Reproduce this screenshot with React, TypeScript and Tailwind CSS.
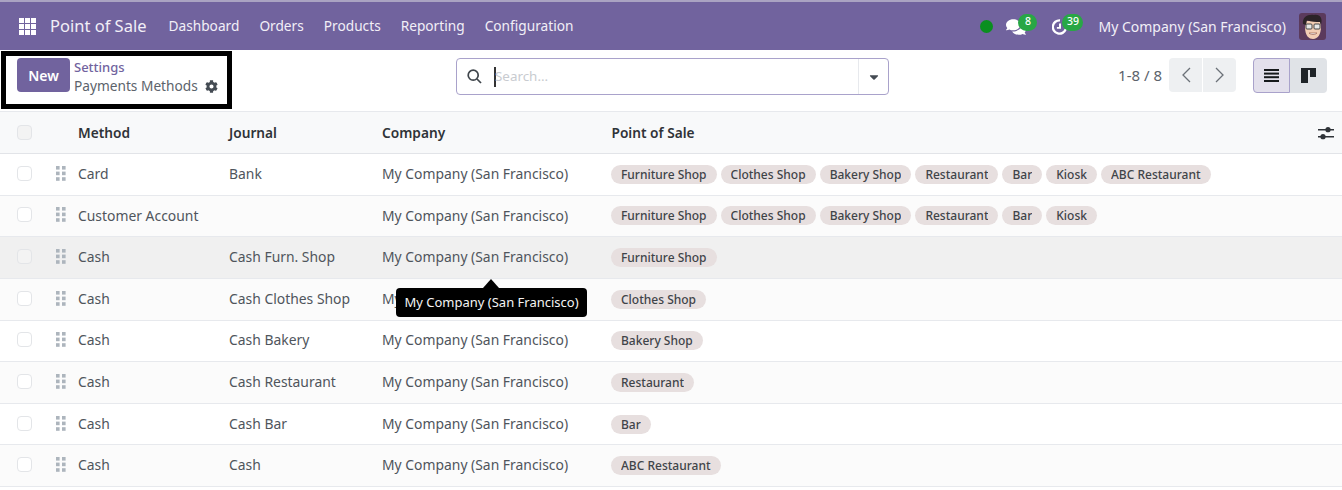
import React from "react";
import { FaCog, FaComments, FaCaretDown } from "react-icons/fa";

const font = { fontFamily: '"Noto Sans", "Open Sans", sans-serif' };

const rows: { method: string; journal: string; tags: string[]; bg: string }[] = [
  { method: "Card", journal: "Bank", tags: ["Furniture Shop", "Clothes Shop", "Bakery Shop", "Restaurant", "Bar", "Kiosk", "ABC Restaurant"], bg: "bg-white" },
  { method: "Customer Account", journal: "", tags: ["Furniture Shop", "Clothes Shop", "Bakery Shop", "Restaurant", "Bar", "Kiosk"], bg: "bg-[#fbfbfb]" },
  { method: "Cash", journal: "Cash Furn. Shop", tags: ["Furniture Shop"], bg: "bg-[#f0f0f0]" },
  { method: "Cash", journal: "Cash Clothes Shop", tags: ["Clothes Shop"], bg: "bg-[#fbfbfb]" },
  { method: "Cash", journal: "Cash Bakery", tags: ["Bakery Shop"], bg: "bg-white" },
  { method: "Cash", journal: "Cash Restaurant", tags: ["Restaurant"], bg: "bg-[#fbfbfb]" },
  { method: "Cash", journal: "Cash Bar", tags: ["Bar"], bg: "bg-white" },
  { method: "Cash", journal: "Cash", tags: ["ABC Restaurant"], bg: "bg-[#fbfbfb]" },
];

function Checkbox({ dim }: { dim?: boolean }) {
  return <div className={`w-[15px] h-[15px] rounded-[4px] border border-[#e3e5e8] ${dim ? "bg-[#f3f3f3]" : "bg-white"}`} />;
}

function Grip() {
  return (
    <svg className="block" width="10" height="15" viewBox="0 0 10 15" fill="#adb5bd">
      <rect x="0" y="0" width="3.6" height="3.6" />
      <rect x="6" y="0" width="3.6" height="3.6" />
      <rect x="0" y="5.6" width="3.6" height="3.6" />
      <rect x="6" y="5.6" width="3.6" height="3.6" />
      <rect x="0" y="11.2" width="3.6" height="3.6" />
      <rect x="6" y="11.2" width="3.6" height="3.6" />
    </svg>
  );
}

function Avatar() {
  return (
    <svg className="block" width="27" height="27" viewBox="0 0 27 27">
      <rect width="27" height="27" rx="3" fill="#5b3a5c" />
      <path d="M6 14 C6 23 10 26 14 26 C19 26 22 21 22 14 L21 8 L7 8 Z" fill="#f3cdb4" />
      <path d="M4 11 C3 4 9 1 15 2 C21 1 24 5 22 12 L21 9 C17 9 12 9 8 7 L7 12 Z" fill="#2b2327" />
      <rect x="7" y="11" width="6" height="5" rx="1" fill="#e8e8e8" stroke="#444" strokeWidth="1" />
      <rect x="15" y="11" width="6" height="5" rx="1" fill="#e8e8e8" stroke="#444" strokeWidth="1" />
      <path d="M10 20 C12 22 16 22 18 20 Z" fill="#fff" stroke="#8a4a3a" strokeWidth="0.6" />
    </svg>
  );
}

export default function App() {
  return (
    <div className="relative w-[1342px] h-[490px] overflow-hidden bg-white text-[13.9px] text-[#4f555c]" style={font}>
      {/* Nav */}
      <div className="h-[50px] bg-[#71639e] flex items-center text-[#f2eff7] border-t-2 border-[#aaa3c2]">
        <svg className="ml-[19px]" width="17" height="17" viewBox="0 0 17 17" fill="#fff">
          {[0, 6, 12].flatMap((y) => [0, 6, 12].map((x) => <rect key={`${x}-${y}`} x={x} y={y} width="5" height="5" />))}
        </svg>
        <span className="ml-[14px] text-[16.5px]">Point of Sale</span>
        <div className="ml-[22px] flex gap-[20px] text-[13.7px]">
          <span>Dashboard</span>
          <span>Orders</span>
          <span>Products</span>
          <span>Reporting</span>
          <span>Configuration</span>
        </div>
        <div className="ml-auto flex items-center">
          <div className="w-[13px] h-[13px] rounded-full bg-[#0a8f1f]" />
          <div className="relative ml-[13px] w-[20px] h-[16px] mt-[1px]">
            <FaComments size={20} className="block text-white mt-[-2px]" />
            <span className="absolute left-[12px] top-[-5px] h-[17px] w-[19px] rounded-full bg-[#28a745] text-white text-[10.5px] font-medium flex items-center justify-center">8</span>
          </div>
          <div className="relative ml-[26px] w-[16px] h-[16px] mt-[1px]">
            <svg className="block" width="16" height="16" viewBox="0 0 18 18" fill="none" stroke="#fff" strokeWidth="2.6">
              <path d="M15.5 11.5 A7.5 7.5 0 1 1 9 1.5" />
              <path d="M9 5 V10 H5.5" strokeWidth="2.2" />
            </svg>
            <span className="absolute left-[10px] top-[-5px] h-[17px] w-[21px] rounded-full bg-[#28a745] text-white text-[10.5px] font-medium flex items-center justify-center">39</span>
          </div>
          <span className="ml-[30px] text-[14px]">My Company (San Francisco)</span>
          <div className="ml-[13px] mr-[16px]"><Avatar /></div>
        </div>
      </div>

      {/* Control panel */}
      <div className="h-[62px] flex items-start border-b border-[#e7e9ed]">
        <div className="ml-[1px] mt-px w-[231px] h-[58px] border-[5px] border-black flex items-start pl-[11px] pt-[2px] shrink-0">
          <button className="w-[53px] h-[34px] rounded-[4px] bg-[#71639e] text-white text-[14px] font-semibold flex items-center justify-center">New</button>
          <div className="ml-[4px] flex flex-col text-[13.7px] leading-[18px]">
            <span className="text-[#71639e] text-[13px] font-medium">Settings</span>
            <span className="flex items-center text-[#5c636b] mt-[1px]">Payments Methods<FaCog size={13} className="ml-[7px] text-[#444b53]" /></span>
          </div>
        </div>
        <div className="ml-[224px] mt-[8px] w-[433px] h-[37px] rounded-[4px] border border-[#a9a2cb] flex items-center">
          <svg className="ml-[10px]" width="15" height="15" viewBox="0 0 15 15" fill="none" stroke="#3f454b" strokeWidth="1.7">
            <circle cx="6.2" cy="6.2" r="5" /><path d="M10 10 L14 14" />
          </svg>
          <div className="ml-[12px] w-[2px] h-[20px] bg-[#333]" />
          <span className="text-[#c8cbd0] text-[13.4px] ml-[-1px]">Search...</span>
          <div className="ml-auto w-[30px] h-full border-l border-[#e7e9ed] flex items-center justify-center">
            <FaCaretDown size={14} className="text-[#444b53]" />
          </div>
        </div>
        <div className="ml-auto mt-[8px] flex items-center h-[34px] mr-[15px]">
          <span className="text-[15px] text-[#5c636b]">1-8 / 8</span>
          <div className="ml-[7px] flex gap-px">
            <div className="w-[33px] h-[34px] rounded-l-[4px] bg-[#eef0f2] flex items-center justify-center">
              <svg width="10" height="16" viewBox="0 0 10 16" fill="none" stroke="#6b7178" strokeWidth="1.3"><path d="M9 1 L2 8 L9 15" /></svg>
            </div>
            <div className="w-[33px] h-[34px] rounded-r-[4px] bg-[#eef0f2] flex items-center justify-center">
              <svg width="10" height="16" viewBox="0 0 10 16" fill="none" stroke="#6b7178" strokeWidth="1.3"><path d="M1 1 L8 8 L1 15" /></svg>
            </div>
          </div>
          <div className="ml-[17px] flex">
            <div className="w-[37px] h-[35px] rounded-l-[4px] bg-[#e3e0ec] border border-[#a9a2cb] flex items-center justify-center">
              <svg width="15" height="13" viewBox="0 0 15 13" fill="#16191c">
                <rect y="0" width="15" height="2" /><rect y="3.6" width="15" height="2" /><rect y="7.2" width="15" height="2" /><rect y="11" width="15" height="2" />
              </svg>
            </div>
            <div className="w-[37px] h-[35px] rounded-r-[4px] bg-[#e0e3e7] flex items-center justify-center">
              <svg width="15" height="15" viewBox="0 0 15 15" fill="#1f2428">
                <rect x="0" y="0" width="15" height="2" /><rect x="0" y="0" width="7" height="15" /><rect x="9" y="0" width="6" height="9" />
              </svg>
            </div>
          </div>
        </div>
      </div>

      {/* Table header */}
      <div className="h-[42px] bg-[#f8f9fa] border-b border-[#e2e4e8] flex items-center font-semibold text-[#2f3338] text-[13.7px]">
        <div className="w-[78px] pl-[17px]"><Checkbox dim /></div>
        <div className="w-[151px] pt-[2px]">Method</div>
        <div className="w-[153px] pt-[2px]">Journal</div>
        <div className="w-[229.5px] pt-[2px]">Company</div>
        <div className="flex-1 pt-[2px]">Point of Sale</div>
        <svg className="mr-[8px]" width="16" height="14" viewBox="0 0 16 14" fill="#2f3338">
          <rect y="3" width="16" height="1.5" /><circle cx="10" cy="3.7" r="2.6" />
          <rect y="10" width="16" height="1.5" /><circle cx="5" cy="10.7" r="2.6" />
        </svg>
      </div>

      {/* Rows */}
      {rows.map((r, i) => (
        <div key={i} className={`h-[41.65px] ${r.bg} border-b border-[#e7e9ed] flex items-center`}>
          <div className="w-[56px] pl-[17px] shrink-0 mt-[-2px]"><Checkbox dim={i === 2} /></div>
          <div className="w-[22px] shrink-0 mt-[-2px]"><Grip /></div>
          <div className="w-[151px] shrink-0">{r.method}</div>
          <div className="w-[153px] shrink-0">{r.journal}</div>
          <div className="w-[229px] shrink-0">My Company (San Francisco)</div>
          <div className="flex gap-[4px]">
            {r.tags.map((t) => (
              <span key={t} className="h-[19px] rounded-full bg-[#e7dfdf] px-[10px] text-[12px] font-medium text-[#3f4449] whitespace-nowrap">
                <span className="block h-[17px] overflow-hidden leading-[19px]">{t}</span>
              </span>
            ))}
          </div>
        </div>
      ))}

      {/* Tooltip */}
      <div className="absolute left-[396px] top-[288px] w-[191px] h-[29px] rounded-[4px] bg-black text-[#f4f4f4] text-[13px] flex items-center justify-center">
        <span>My Company (San Francisco)</span>
        <div className="absolute left-[87px] top-[-9px] w-0 h-0 border-l-[8px] border-r-[8px] border-b-[9px] border-l-transparent border-r-transparent border-b-black" />
      </div>
    </div>
  );
}
